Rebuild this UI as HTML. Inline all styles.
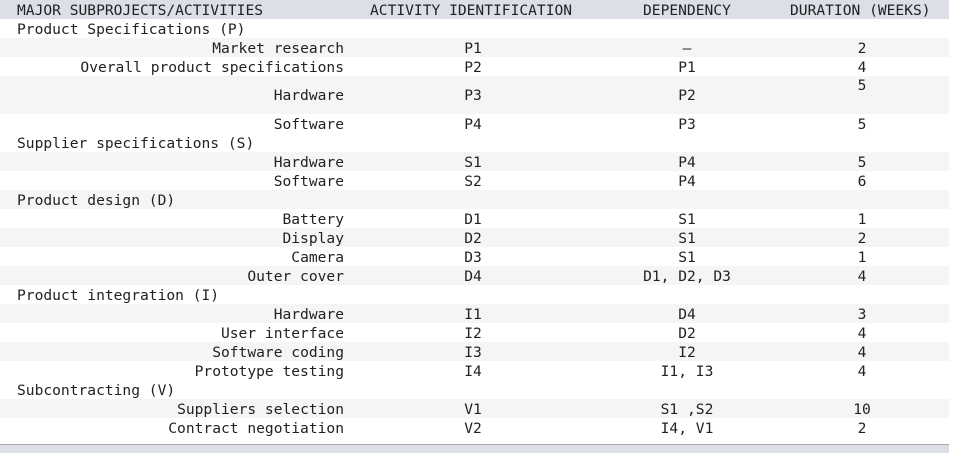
<!DOCTYPE html>
<html><head><style>
body{margin:0;width:957px;height:452px;background:#fff;font-family:"DejaVu Sans Mono","Liberation Mono",monospace;font-size:14.6px;color:#222;position:relative;overflow:hidden}
.r{position:absolute;left:0;width:949px;height:19px}
.g{background:#f5f5f5}
.c{position:absolute;top:1px;line-height:19px;white-space:pre}
.a{right:605px;text-align:right}
.t{left:17px}
.b{left:373px;width:200px;text-align:center}
.d{left:587px;width:200px;text-align:center}
.e{left:762px;width:200px;text-align:center}
</style></head><body>
<div class="r" style="top:0;background:#dcdfe7;height:19px"><span class="c t">MAJOR SUBPROJECTS/ACTIVITIES</span><span class="c" style="left:370px">ACTIVITY IDENTIFICATION</span><span class="c" style="left:643px">DEPENDENCY</span><span class="c" style="left:790px">DURATION (WEEKS)</span></div>
<div class="r" style="top:19px"><span class="c t">Product Specifications (P)</span></div>
<div class="r g" style="top:38px"><span class="c a">Market research</span><span class="c b">P1</span><span class="c d">–</span><span class="c e">2</span></div>
<div class="r" style="top:57px"><span class="c a">Overall product specifications</span><span class="c b">P2</span><span class="c d">P1</span><span class="c e">4</span></div>
<div class="r g" style="top:76px;height:38px"><span class="c a" style="top:10px">Hardware</span><span class="c b" style="top:10px">P3</span><span class="c d" style="top:10px">P2</span><span class="c e" style="top:0">5</span></div>
<div class="r" style="top:114px"><span class="c a">Software</span><span class="c b">P4</span><span class="c d">P3</span><span class="c e">5</span></div>
<div class="r" style="top:133px"><span class="c t">Supplier specifications (S)</span></div>
<div class="r g" style="top:152px"><span class="c a">Hardware</span><span class="c b">S1</span><span class="c d">P4</span><span class="c e">5</span></div>
<div class="r" style="top:171px"><span class="c a">Software</span><span class="c b">S2</span><span class="c d">P4</span><span class="c e">6</span></div>
<div class="r g" style="top:190px"><span class="c t">Product design (D)</span></div>
<div class="r" style="top:209px"><span class="c a">Battery</span><span class="c b">D1</span><span class="c d">S1</span><span class="c e">1</span></div>
<div class="r g" style="top:228px"><span class="c a">Display</span><span class="c b">D2</span><span class="c d">S1</span><span class="c e">2</span></div>
<div class="r" style="top:247px"><span class="c a">Camera</span><span class="c b">D3</span><span class="c d">S1</span><span class="c e">1</span></div>
<div class="r g" style="top:266px"><span class="c a">Outer cover</span><span class="c b">D4</span><span class="c d">D1, D2, D3</span><span class="c e">4</span></div>
<div class="r" style="top:285px"><span class="c t">Product integration (I)</span></div>
<div class="r g" style="top:304px"><span class="c a">Hardware</span><span class="c b">I1</span><span class="c d">D4</span><span class="c e">3</span></div>
<div class="r" style="top:323px"><span class="c a">User interface</span><span class="c b">I2</span><span class="c d">D2</span><span class="c e">4</span></div>
<div class="r g" style="top:342px"><span class="c a">Software coding</span><span class="c b">I3</span><span class="c d">I2</span><span class="c e">4</span></div>
<div class="r" style="top:361px"><span class="c a">Prototype testing</span><span class="c b">I4</span><span class="c d">I1, I3</span><span class="c e">4</span></div>
<div class="r" style="top:380px"><span class="c t">Subcontracting (V)</span></div>
<div class="r g" style="top:399px"><span class="c a">Suppliers selection</span><span class="c b">V1</span><span class="c d">S1 ,S2</span><span class="c e">10</span></div>
<div class="r" style="top:418px"><span class="c a">Contract negotiation</span><span class="c b">V2</span><span class="c d">I4, V1</span><span class="c e">2</span></div>
<div style="position:absolute;left:0;top:444px;width:949px;height:8px;background:#dcdfe7;border-top:1px solid #a8abb2"></div>
</body></html>
